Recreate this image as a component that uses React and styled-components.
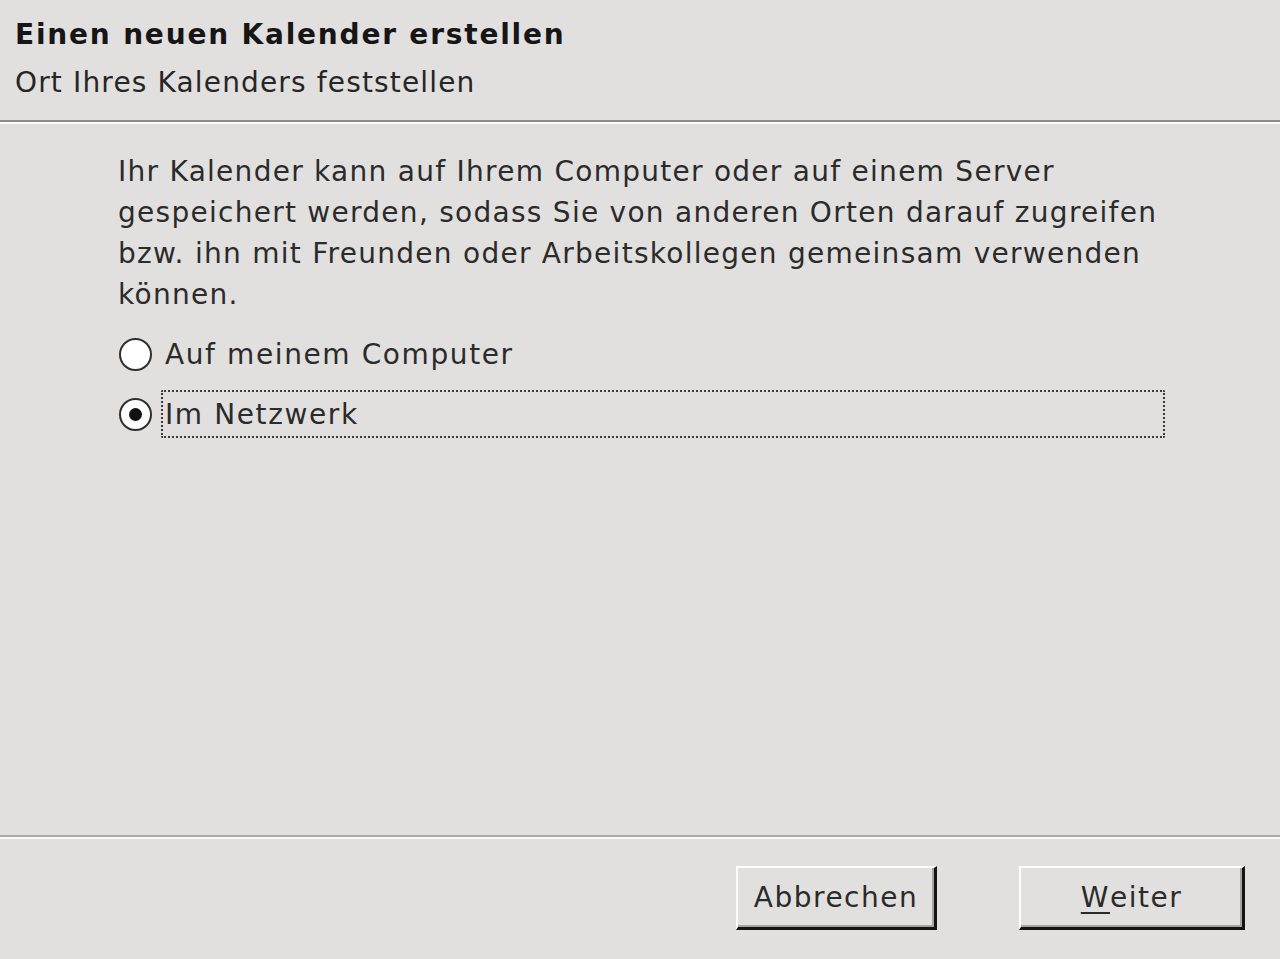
import React from 'react'
import styled, { createGlobalStyle } from 'styled-components'

const GlobalStyle = createGlobalStyle`
  html, body {
    margin: 0;
    padding: 0;
    background: #e1e0df;
  }
  body {
    font-family: "DejaVu Sans", "Liberation Sans", sans-serif;
    color: #2b2b2b;
  }
`

function App() {
  return (
    <>
      <GlobalStyle />
      <Wizard>
        <Header>
          <Title>Einen neuen Kalender erstellen</Title>
          <Subtitle>Ort Ihres Kalenders feststellen</Subtitle>
        </Header>
        <Groove $dark="#8c8c8c" />

        <Page>
          <Description>
            Ihr Kalender kann auf Ihrem Computer oder auf einem Server<br />
            gespeichert werden, sodass Sie von anderen Orten darauf zugreifen<br />
            bzw. ihn mit Freunden oder Arbeitskollegen gemeinsam verwenden<br />
            können.
          </Description>

          <RadioGroup>
            <RadioRow>
              <RadioCircle />
              <RadioLabel>Auf meinem Computer</RadioLabel>
            </RadioRow>
            <RadioRow>
              <RadioCircle $checked />
              <RadioLabel $focused>Im Netzwerk</RadioLabel>
            </RadioRow>
          </RadioGroup>
        </Page>

        <Groove $dark="#a9a9a9" />
        <Footer>
          <Button $width="201px">Abbrechen</Button>
          <Button $width="226px">
            <AccessKey>W</AccessKey>eiter
          </Button>
        </Footer>
      </Wizard>
    </>
  )
}

const Wizard = styled.div`
  display: flex;
  flex-direction: column;
  height: 959px;
  width: 1280px;
  overflow: hidden;
`

const Header = styled.div`
  display: flex;
  flex-direction: column;
  padding: 15px 15px 17px 15px;
`

const Title = styled.div`
  font-weight: bold;
  font-size: 28px;
  letter-spacing: 1.8px;
  line-height: 40px;
  color: #161616;
`

const Subtitle = styled.div`
  font-size: 28px;
  letter-spacing: 1.15px;
  line-height: 40px;
  margin-top: 8px;
  color: #262626;
`

const Groove = styled.div`
  height: 0;
  border-top: 2px solid ${p => p.$dark};
  border-bottom: 2px solid #fbfbfb;
`

const Page = styled.div`
  flex: 1;
  padding: 27px 115px 0 118px;
  display: flex;
  flex-direction: column;
`

const Description = styled.p`
  margin: 0;
  font-size: 28px;
  letter-spacing: 1.27px;
  line-height: 41px;
  white-space: nowrap;
`

const RadioGroup = styled.div`
  display: flex;
  flex-direction: column;
  gap: 12px;
  margin-top: 15px;
`

const RadioRow = styled.div`
  display: flex;
  align-items: center;
  height: 48px;
`

const RadioCircle = styled.span`
  position: relative;
  box-sizing: border-box;
  width: 33px;
  height: 33px;
  border-radius: 50%;
  border: 2.5px solid #2f2f2f;
  background: #fff;
  flex-shrink: 0;
  margin-left: 1px;
  margin-right: 9px;

  &::after {
    content: '';
    display: ${p => (p.$checked ? 'block' : 'none')};
    position: absolute;
    left: 50%;
    top: 50%;
    width: 13px;
    height: 13px;
    margin: -6.5px 0 0 -6.5px;
    border-radius: 50%;
    background: #111;
  }
`

const RadioLabel = styled.span`
  flex: ${p => (p.$focused ? 1 : 'none')};
  box-sizing: border-box;
  height: 48px;
  display: flex;
  align-items: center;
  padding-left: 2px;
  border: 2px dotted ${p => (p.$focused ? '#3a3a3a' : 'transparent')};
  border-radius: 2px;
  font-size: 28px;
  letter-spacing: 1.6px;
  color: #2b2b2b;
`

const Footer = styled.div`
  display: flex;
  justify-content: flex-end;
  gap: 82px;
  padding: 27px 35px 29px 0;
`

const Button = styled.button`
  box-sizing: border-box;
  width: ${p => p.$width};
  height: 64px;
  padding: 0;
  background: #e1e0df;
  border-style: solid;
  border-width: 2px 3px 3px 2px;
  border-color: #fdfdfd #141414 #141414 #fdfdfd;
  box-shadow: inset -2px -2px 0 #a3a3a3;
  font-family: "DejaVu Sans", "Liberation Sans", sans-serif;
  font-size: 28px;
  letter-spacing: 1.5px;
  color: #2b2b2b;
  display: flex;
  align-items: center;
  justify-content: center;
`

const AccessKey = styled.span`
  text-decoration: underline;
  text-underline-offset: 5px;
  text-decoration-thickness: 2px;
`

export default App
